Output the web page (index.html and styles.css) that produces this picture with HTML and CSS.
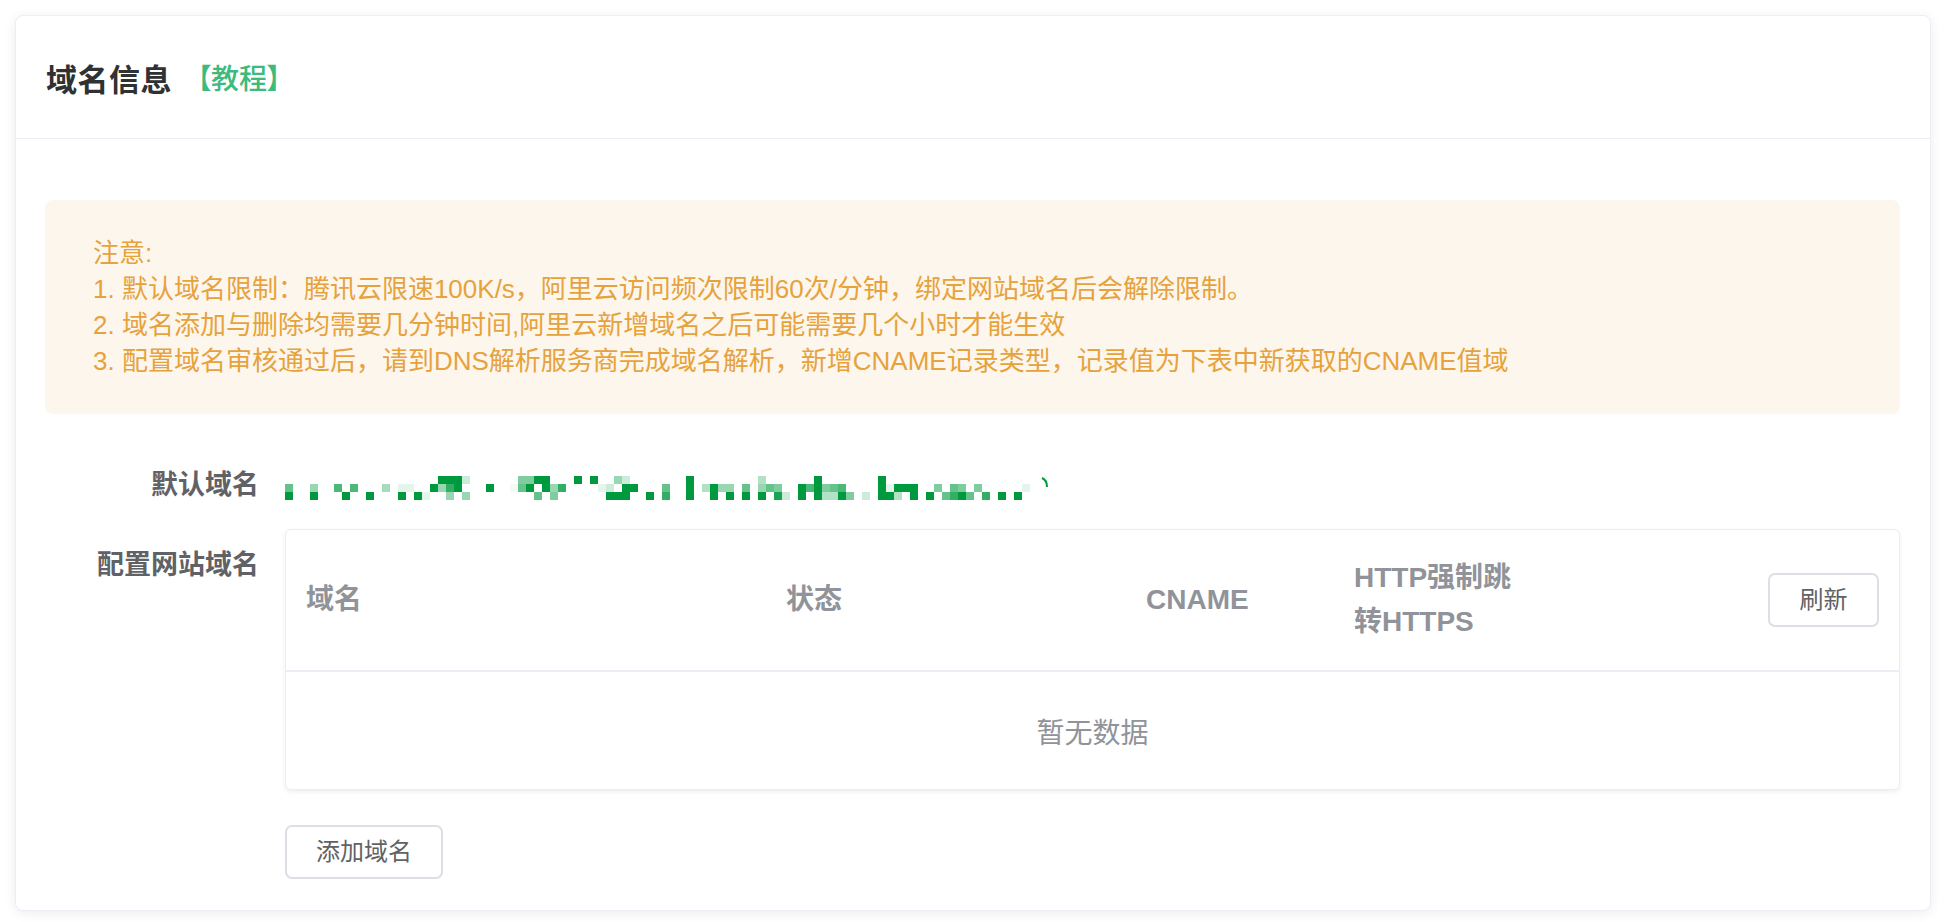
FILE: index.html
```html
<!DOCTYPE html>
<html lang="zh-CN">
<head>
<meta charset="utf-8">
<title>域名信息</title>
<link rel="stylesheet" href="styles.css">
</head>
<body>
<div class="page">
  <section class="card">
    <header class="card-header">
      <h2 class="card-title">域名信息</h2>
      <a class="tutorial">【教程】</a>
    </header>
    <div class="card-body">
      <div class="notice">
        <p>注意:</p>
        <p>1. 默认域名限制：腾讯云限速100K/s，阿里云访问频次限制60次/分钟，绑定网站域名后会解除限制。</p>
        <p>2. 域名添加与删除均需要几分钟时间,阿里云新增域名之后可能需要几个小时才能生效</p>
        <p>3. 配置域名审核通过后，请到DNS解析服务商完成域名解析，新增CNAME记录类型，记录值为下表中新获取的CNAME值域</p>
      </div>

      <div class="form-row">
        <div class="form-label">默认域名</div>
        <div class="form-value">
          <svg class="mosaic" width="772" height="28" viewBox="0 0 772 28" aria-hidden="true">
            <g fill="#009a3e">
              <rect x="2" y="12" width="8" height="8" opacity=".6"/><rect x="2" y="20" width="8" height="8"/>
              <rect x="27" y="12" width="8" height="8" opacity=".4"/><rect x="27" y="20" width="8" height="8"/>
              <rect x="51" y="12" width="8" height="8" opacity=".7"/>
              <rect x="59" y="20" width="8" height="8"/>
              <rect x="67" y="12" width="8" height="8" opacity=".7"/>
              <rect x="83" y="20" width="8" height="8"/>
              <rect x="99" y="12" width="8" height="8" opacity=".35"/>
              <rect x="115" y="20" width="8" height="8"/><rect x="115" y="12" width="16" height="8" opacity=".1"/>
              <rect x="131" y="20" width="8" height="8"/>
              <rect x="139" y="20" width="8" height="8" opacity=".1"/>
              <rect x="147" y="12" width="8" height="8"/>
              <rect x="155" y="4" width="8" height="8"/><rect x="155" y="12" width="8" height="8" opacity=".4"/>
              <rect x="163" y="4" width="8" height="8"/><rect x="163" y="12" width="8" height="8" opacity=".8"/><rect x="163" y="20" width="8" height="8" opacity=".4"/>
              <rect x="171" y="4" width="8" height="8"/><rect x="171" y="12" width="8" height="8"/>
              <rect x="179" y="4" width="8" height="8" opacity=".2"/><rect x="179" y="20" width="8" height="8" opacity=".4"/>
              <rect x="203" y="12" width="8" height="8"/>
              <rect x="227" y="12" width="8" height="8" opacity=".05"/>
              <rect x="235" y="4" width="8" height="8" opacity=".5"/><rect x="235" y="12" width="8" height="8" opacity=".6"/>
              <rect x="243" y="4" width="8" height="8" opacity=".5"/><rect x="243" y="12" width="8" height="8"/>
              <rect x="251" y="4" width="8" height="8"/><rect x="251" y="20" width="8" height="8" opacity=".6"/>
              <rect x="259" y="4" width="8" height="8"/><rect x="259" y="12" width="8" height="8"/>
              <rect x="267" y="12" width="8" height="8" opacity=".4"/><rect x="267" y="20" width="8" height="8" opacity=".5"/>
              <rect x="275" y="12" width="8" height="8" opacity=".8"/>
              <rect x="291" y="4" width="8" height="8"/>
              <rect x="307" y="4" width="8" height="8"/>
              <rect x="315" y="12" width="8" height="8" opacity=".1"/>
              <rect x="323" y="12" width="8" height="8" opacity=".2"/><rect x="323" y="20" width="8" height="8"/>
              <rect x="331" y="4" width="8" height="8" opacity=".4"/><rect x="331" y="20" width="8" height="8"/>
              <rect x="339" y="4" width="8" height="8" opacity=".2"/><rect x="339" y="12" width="8" height="8"/><rect x="339" y="20" width="8" height="8"/>
              <rect x="347" y="12" width="8" height="8"/>
              <rect x="363" y="20" width="8" height="8"/>
              <rect x="379" y="12" width="8" height="8" opacity=".6"/><rect x="379" y="20" width="8" height="8" opacity=".8"/>
              <rect x="403" y="4" width="8" height="24"/>
              <rect x="419" y="12" width="8" height="8" opacity=".3"/>
              <rect x="427" y="12" width="8" height="8"/><rect x="427" y="20" width="8" height="8"/>
              <rect x="435" y="12" width="8" height="8" opacity=".4"/>
              <rect x="443" y="12" width="8" height="8" opacity=".4"/><rect x="443" y="20" width="8" height="8"/>
              <rect x="459" y="12" width="8" height="8" opacity=".6"/><rect x="459" y="20" width="8" height="8"/>
              <rect x="475" y="4" width="8" height="8" opacity=".3"/><rect x="475" y="12" width="8" height="8" opacity=".4"/><rect x="475" y="20" width="8" height="8"/>
              <rect x="483" y="12" width="8" height="8" opacity=".6"/>
              <rect x="491" y="12" width="8" height="8" opacity=".5"/><rect x="491" y="20" width="8" height="8" opacity=".9"/>
              <rect x="499" y="20" width="8" height="8" opacity=".2"/>
              <rect x="515" y="12" width="8" height="8"/><rect x="515" y="20" width="8" height="8"/>
              <rect x="523" y="12" width="8" height="8" opacity=".7"/>
              <rect x="531" y="4" width="8" height="24"/>
              <rect x="539" y="12" width="8" height="8" opacity=".5"/><rect x="539" y="20" width="8" height="8" opacity=".3"/>
              <rect x="547" y="12" width="8" height="8" opacity=".6"/><rect x="547" y="20" width="8" height="8" opacity=".3"/>
              <rect x="555" y="12" width="8" height="8" opacity=".7"/><rect x="555" y="20" width="8" height="8"/>
              <rect x="563" y="20" width="8" height="8" opacity=".5"/>
              <rect x="579" y="20" width="8" height="8" opacity=".2"/>
              <rect x="595" y="4" width="8" height="24"/>
              <rect x="603" y="12" width="8" height="8" opacity=".1"/><rect x="603" y="20" width="8" height="8"/>
              <rect x="611" y="12" width="8" height="8"/><rect x="611" y="20" width="8" height="8" opacity=".3"/>
              <rect x="619" y="12" width="8" height="8"/>
              <rect x="627" y="12" width="8" height="8"/><rect x="627" y="20" width="8" height="8"/>
              <rect x="643" y="20" width="8" height="8"/>
              <rect x="651" y="12" width="8" height="8" opacity=".5"/>
              <rect x="659" y="20" width="8" height="8" opacity=".6"/>
              <rect x="667" y="12" width="8" height="8" opacity=".6"/><rect x="667" y="20" width="8" height="8" opacity=".8"/>
              <rect x="675" y="12" width="8" height="8" opacity=".5"/><rect x="675" y="20" width="8" height="8"/>
              <rect x="683" y="20" width="8" height="8" opacity=".6"/>
              <rect x="691" y="12" width="8" height="8" opacity=".5"/>
              <rect x="699" y="20" width="8" height="8" opacity=".8"/>
              <rect x="715" y="20" width="8" height="8"/>
              <rect x="731" y="20" width="8" height="8"/>
              <rect x="739" y="12" width="8" height="8" opacity=".1"/>
            </g>
            <path d="M759 6 q5 2 5 9" fill="none" stroke="#009a3e" stroke-width="2"/>
          </svg>
        </div>
      </div>

      <div class="form-row">
        <div class="form-label">配置网站域名</div>
        <div class="form-value">
          <div class="table">
            <div class="table-head">
              <div class="th">域名</div>
              <div class="th">状态</div>
              <div class="th">CNAME</div>
              <div class="th">HTTP强制跳转HTTPS</div>
              <div class="th th-right"><button class="btn">刷新</button></div>
            </div>
            <div class="table-empty">暂无数据</div>
          </div>
          <button class="btn btn-add">添加域名</button>
        </div>
      </div>
    </div>
  </section>
</div>
</body>
</html>
```

FILE: styles.css
```css
* { box-sizing: border-box; }

html, body {
  margin: 0;
  padding: 0;
  background: #ffffff;
}

body {
  font-family: "Liberation Sans", "Noto Sans CJK SC", sans-serif;
  color: #606266;
}

.page {
  padding: 15px 15px 14px 15px;
}

.card {
  width: 1916px;
  border: 1px solid #ebeef5;
  border-radius: 8px;
  background: #fff;
  box-shadow: 0 2px 12px 0 rgba(0, 0, 0, 0.08);
  overflow: hidden;
}

.card-header {
  height: 123px;
  padding: 0 30px;
  display: flex;
  align-items: center;
  border-bottom: 1px solid #ebeef5;
}

.card-title {
  margin: 0;
  font-size: 31px;
  font-weight: 700;
  color: #303133;
  letter-spacing: 0.5px;
}

.tutorial {
  margin-left: 25px;
  font-size: 28px;
  color: #3dba7c;
  font-weight: 500;
  font-feature-settings: "palt";
}

.card-body {
  padding: 61px 30px 31px 29px;
}

.notice {
  background: #fdf6ec;
  border-radius: 8px;
  padding: 35px 48px 35px 48px;
  color: #e6a23c;
  font-size: 26px;
  line-height: 36px;
}

.notice p {
  margin: 0;
}

.form-row {
  display: flex;
  align-items: flex-start;
}

.notice + .form-row {
  margin-top: 31px;
}

.form-label {
  width: 240px;
  flex: none;
  padding-right: 26px;
  text-align: right;
  font-size: 27px;
  font-weight: 700;
  color: #606266;
  line-height: 80px;
}

.form-value {
  flex: 1;
  min-width: 0;
}

.mosaic {
  display: block;
  margin: 27px 0 0 -2px;
  height: 28px;
}

.table {
  border: 1px solid #ebeef5;
  border-radius: 6px;
  background: #fff;
  box-shadow: 0 2px 5px rgba(0, 0, 0, 0.07);
  margin-top: 4px;
}

.table-head {
  display: grid;
  grid-template-columns: 480px 360px 208px 212px 1fr;
  align-items: center;
  min-height: 142px;
  border-bottom: 2px solid #ebeef5;
}

.th {
  padding: 0 20px;
  font-size: 28px;
  line-height: 44px;
  font-weight: 700;
  color: #909399;
}

.th-right {
  text-align: right;
}

.table-empty {
  height: 117px;
  display: flex;
  align-items: center;
  justify-content: center;
  font-size: 28px;
  color: #909399;
}

.btn {
  font-family: "Liberation Sans", "Noto Sans CJK SC", sans-serif;
  font-size: 24px;
  line-height: 24px;
  border: 2px solid #dcdfe6;
  border-radius: 7px;
  background: #fff;
  color: #606266;
  cursor: pointer;
}

.btn-add {
  margin-top: 35px;
  width: 158px;
  padding: 13px 0;
}

.th .btn {
  width: 111px;
  padding: 13px 0;
}
```
